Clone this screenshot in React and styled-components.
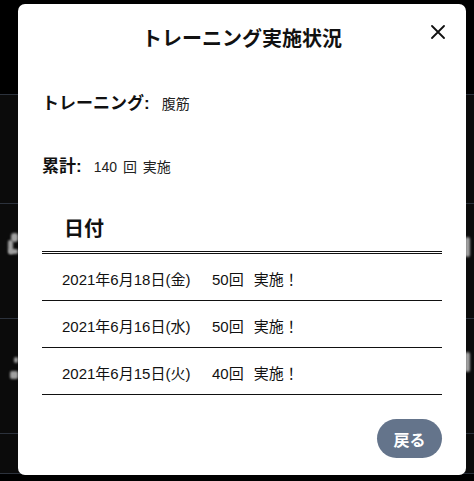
import React from "react";
import styled, { createGlobalStyle } from "styled-components";

const GlobalStyle = createGlobalStyle`
  html, body { margin: 0; padding: 0; background: #000; }
  body {
    font-family: "Liberation Sans", "Noto Sans CJK JP", sans-serif;
    color: #111;
  }
  * { box-sizing: border-box; }
`;

/* ---------- background page (dimmed, blurred) ---------- */
const Page = styled.div`
  height: 481px;
  display: flex;
  flex-direction: column;
  background: #000;
  overflow: hidden;
`;

const TopBar = styled.div`
  height: 94px;
  flex: none;
  background: #000;
`;

const BgRow = styled.div`
  position: relative;
  height: ${(p) => p.$h}px;
  flex: none;
  border-top: 1px solid #2c323c;
  background: #0b0b0b;
`;

/* blurred fragments of the page content peeking out beside the dialog */
const Blob = styled.div`
  position: absolute;
  top: ${(p) => p.$top}px;
  left: ${(p) => (p.$left !== undefined ? `${p.$left}px` : "auto")};
  right: ${(p) => (p.$right !== undefined ? `${p.$right}px` : "auto")};
  width: ${(p) => p.$w}px;
  height: ${(p) => p.$hh}px;
  border-radius: ${(p) => p.$r || 3}px;
  background: #a0a0a0;
  filter: blur(1.2px);
`;

const BottomStrip = styled.div`
  flex: 1;
  background: #000;
  border-top: 1px solid #2c323c;
`;

/* ---------- modal ---------- */
const Overlay = styled.div`
  position: fixed;
  inset: 0;
  display: flex;
  align-items: flex-start;
  padding: 4px 8px 6px 18px;
`;

const Modal = styled.div`
  width: 448px;
  height: 471px;
  background: #fff;
  border-radius: 7px;
  padding: 0 24px;
  display: flex;
  flex-direction: column;
`;

const Header = styled.div`
  height: 66px;
  display: grid;
  grid-template-columns: 40px 1fr 40px;
  align-items: center;
`;

const Title = styled.h2`
  grid-column: 2;
  margin: 0;
  text-align: center;
  font-family: "Noto Sans CJK JP", sans-serif;
  font-size: 20px;
  font-weight: 700;
  line-height: 28px;
  color: #111;
  padding-top: 2px;
`;

const CloseButton = styled.button`
  grid-column: 3;
  justify-self: end;
  width: 24px;
  height: 24px;
  margin-right: -8px;
  margin-top: -10px;
  border: 0;
  background: transparent;
  padding: 0;
  display: flex;
  align-items: center;
  justify-content: center;
  cursor: pointer;
`;

const InfoLine = styled.p`
  margin: ${(p) => p.$mt}px 0 0;
  line-height: 24px;
  display: flex;
  align-items: baseline;
  gap: 12px;
`;

const Label = styled.span`
  font-size: 17px;
  font-weight: 700;
  color: #111;
`;

const Value = styled.span`
  font-size: 14px;
  color: #222;
  word-spacing: 2px;
`;

const List = styled.div`
  margin-top: 28px;
  display: flex;
  flex-direction: column;
`;

const HeadRow = styled.div`
  padding: 8px 22px 8px;
  border-bottom: 3px double #111;
  font-size: 20px;
  font-weight: 700;
  line-height: 28px;
  color: #111;
`;

const Row = styled.div`
  height: 47px;
  padding: 2px 20px 0;
  border-bottom: 1px solid #111;
  display: grid;
  grid-template-columns: 150px 1fr;
  align-items: center;
  font-size: 15px;
  color: #111;
`;

const Count = styled.span`
  word-spacing: 6px;
`;

const Footer = styled.div`
  margin-top: 24px;
  display: flex;
  justify-content: flex-end;
`;

const BackButton = styled.button`
  width: 65px;
  height: 39px;
  border: 0;
  border-radius: 20px;
  background: #64748b;
  color: #fff;
  font-family: "Noto Sans CJK JP", sans-serif;
  font-size: 16px;
  font-weight: 700;
  cursor: pointer;
`;

const rows = [
  { date: "2021年6月18日(金)", count: "50回" },
  { date: "2021年6月16日(水)", count: "50回" },
  { date: "2021年6月15日(火)", count: "40回" },
];

export default function App() {
  return (
    <>
      <GlobalStyle />
      <Page aria-hidden="true">
        <TopBar />
        <BgRow $h={109} />
        <BgRow $h={115}>
          <Blob $top={29} $left={11} $w={7} $hh={9} $r={3} />
          <Blob $top={36} $left={8} $w={5} $hh={14} $r={2} />
          <Blob $top={45} $left={9} $w={9} $hh={5} $r={2} />
          <Blob $top={33} $right={4} $w={5} $hh={20} $r={4} />
        </BgRow>
        <BgRow $h={115}>
          <Blob $top={38} $left={14} $w={4} $hh={6} $r={2} />
          <Blob $top={52} $left={10} $w={8} $hh={8} $r={2} />
          <Blob $top={33} $right={4} $w={5} $hh={20} $r={4} />
        </BgRow>
        <BgRow $h={40} />
        <BottomStrip />
      </Page>
      <Overlay>
        <Modal role="dialog" aria-modal="true">
          <Header>
            <Title>トレーニング実施状況</Title>
            <CloseButton aria-label="閉じる">
              <svg width="14" height="14" viewBox="0 0 14 14">
                <path d="M1 1L13 13M13 1L1 13" stroke="#111" strokeWidth="1.8" strokeLinecap="round" />
              </svg>
            </CloseButton>
          </Header>
          <InfoLine $mt={22}>
            <Label>トレーニング:</Label>
            <Value>腹筋</Value>
          </InfoLine>
          <InfoLine $mt={39}>
            <Label>累計:</Label>
            <Value>140 回 実施</Value>
          </InfoLine>
          <List>
            <HeadRow>日付</HeadRow>
            {rows.map((r) => (
              <Row key={r.date}>
                <span>{r.date}</span>
                <Count>{r.count} 実施！</Count>
              </Row>
            ))}
          </List>
          <Footer>
            <BackButton>戻る</BackButton>
          </Footer>
        </Modal>
      </Overlay>
    </>
  );
}
